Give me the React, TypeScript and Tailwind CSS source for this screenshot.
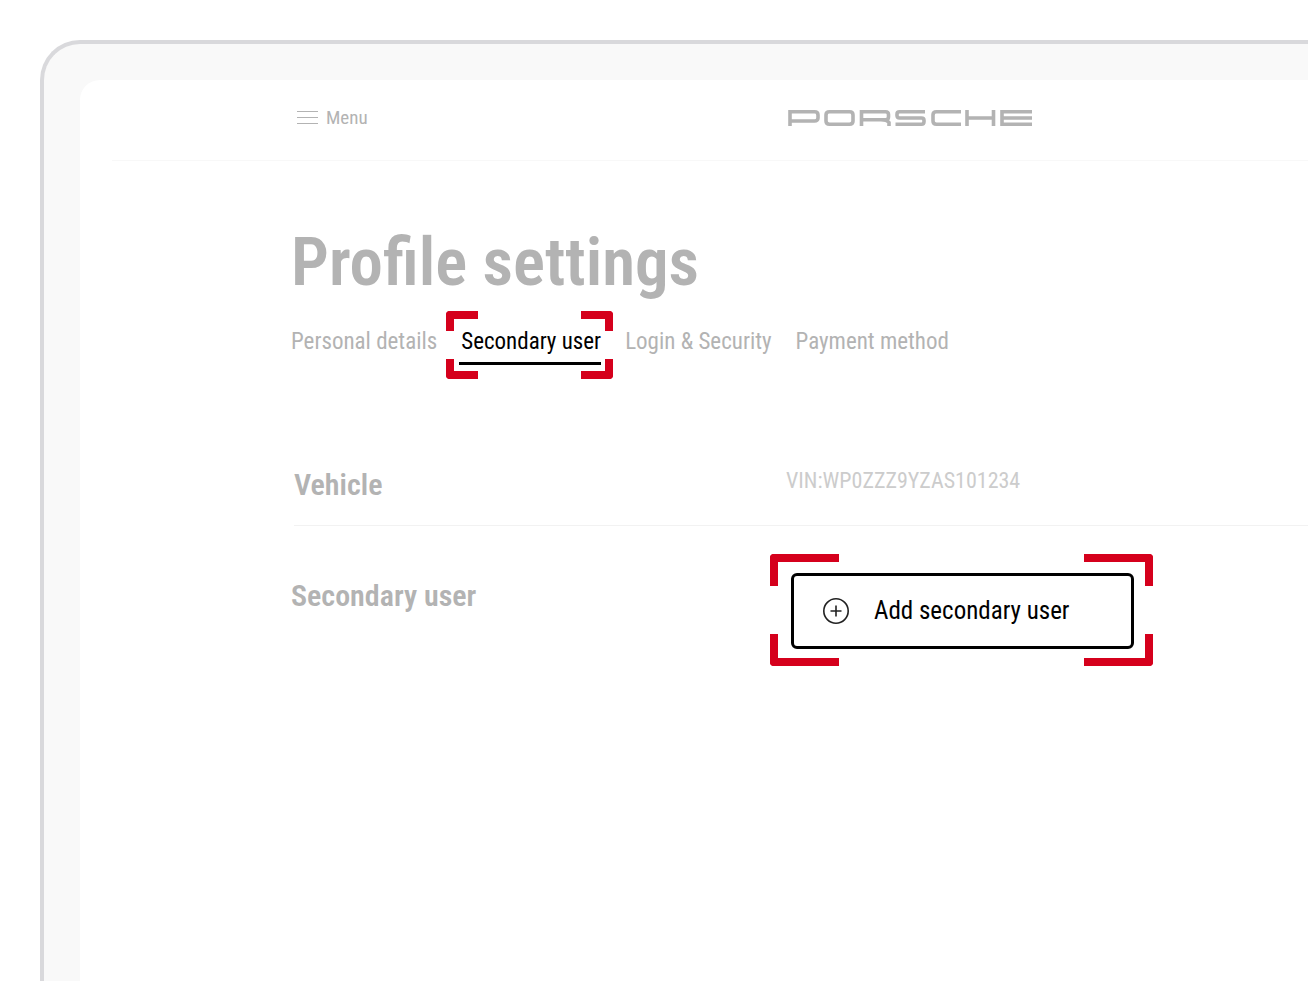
import React from 'react';

const tabs = [
  { label: 'Personal details' },
  { label: 'Secondary user', active: true },
  { label: 'Login & Security' },
  { label: 'Payment method' },
];

// Four red corners around the nearest positioned parent
const Corners = ({ size }: { size: string }) => (
  <>
    <span className={`absolute left-0 top-0 rounded-tl border-l-8 border-t-8 border-[#d5001c] ${size}`} />
    <span className={`absolute right-0 top-0 rounded-tr border-r-8 border-t-8 border-[#d5001c] ${size}`} />
    <span className={`absolute bottom-0 left-0 rounded-bl border-b-8 border-l-8 border-[#d5001c] ${size}`} />
    <span className={`absolute bottom-0 right-0 rounded-br border-b-8 border-r-8 border-[#d5001c] ${size}`} />
  </>
);

const Wordmark = () => (
  <svg width="244" height="16" viewBox="0 0 244 16" fill="none" stroke="#b3b3b3" strokeWidth="3.6" role="img" aria-label="Porsche">
    <path d="M2 16V1.800H26.500Q30 1.800 30 5V8Q30 11 26.500 11H2" />
    <path d="M41.500 1.800H61.500Q65 1.800 65 5V11Q65 14.200 61.500 14.200H41.500Q38 14.200 38 11V5Q38 1.800 41.500 1.800Z" />
    <path d="M73.500 16V1.800H97.500Q100.500 1.800 100.500 4.500V7Q100.500 9.800 97.500 9.800H73.500M93 9.800Q99 10 101 12.500V16" />
    <path d="M137 1.800H111.500Q109 1.800 109 4.200V5.600Q109 8 111.500 8H133.500Q136 8 136 10.400V11.800Q136 14.200 133.500 14.200H107.500" />
    <path d="M173 1.800H148.500Q145 1.800 145 5V11Q145 14.200 148.500 14.200H173" />
    <path d="M179 0V16M205.500 0V16M179 8H205.500" />
    <path d="M244 1.800H214V14.200H244M214 8H244" />
  </svg>
);

const App = () => {
  return (
    <div className="flex min-h-screen overflow-hidden bg-white pl-10 pt-10 font-['Roboto_Condensed',Roboto,sans-serif] text-[#b3b3b3]">
      <div className="flex flex-1 rounded-tl-[40px] border-l-4 border-t-4 border-[#d9d9dc] bg-[#f9f9f9] pl-9 pt-9">
        <div className="flex-1 rounded-tl-[20px] bg-white">
          <header className="ml-8 grid h-[81px] grid-cols-[479px_1fr] items-center border-b border-[#f8f8f8] pb-[5px] pl-[179px]">
            <button type="button" className="flex items-center gap-2 pl-[6px] text-[19px] leading-7">
              <svg width="21" height="13" viewBox="0 0 21 13" stroke="#b3b3b3">
                <path d="M0 .5H21M0 6.500H21M0 12.500H21" />
              </svg>
              Menu
            </button>
            <div className="pl-[18px]">
              <Wordmark />
            </div>
          </header>

          <main className="pl-[211px]">
            <h1 className="pt-[61px] text-[67px] font-semibold leading-20">Profile settings</h1>

            <nav className="flex gap-6 pt-[26px]">
              {tabs.map((tab) => (
                <a key={tab.label} href="#" className={`relative text-[23px] leading-7 ${tab.active ? 'text-black' : ''}`}>
                  {tab.label}
                  {tab.active && (
                    <>
                      <span className="absolute -left-[2px] right-0 -bottom-[9px] h-[3px] bg-black" />
                      <span className="absolute -bottom-[23px] -left-[15px] -right-3 -top-[17px]">
                        <Corners size="h-5 w-8" />
                      </span>
                    </>
                  )}
                </a>
              ))}
            </nav>

            <section className="ml-[3px] mt-[111px] grid grid-cols-[476px_1fr] border-b border-[#f2f2f2] pb-[22px]">
              <h2 className="text-3xl font-semibold">Vehicle</h2>
              <p className="pl-4 text-[22px] leading-7 text-[#cccccc]">VIN:WP0ZZZ9YZAS101234</p>
            </section>

            <section className="grid grid-cols-[479px_1fr] pt-7">
              <h2 className="pt-6 text-3xl font-semibold">Secondary user</h2>
              <div className="relative h-[112px] w-[383px] pb-[17px] pl-[21px] pr-[19px] pt-[19px]">
                <Corners size="h-8 w-[69px]" />
                <button type="button" className="flex h-full w-full items-center gap-6 rounded-md border-3 border-black pl-7 text-[25px] text-black">
                  <svg width="28" height="28" viewBox="0 0 28 28" fill="none" stroke="#222" strokeWidth="1.600">
                    <circle cx="14" cy="14" r="12.200" />
                    <path d="M14 8.500V19.500M8.500 14H19.500" />
                  </svg>
                  Add secondary user
                </button>
              </div>
            </section>
          </main>
        </div>
      </div>
    </div>
  );
};

export default App;
